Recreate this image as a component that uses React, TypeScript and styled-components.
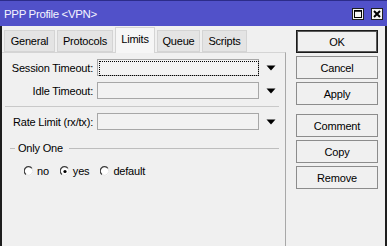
import React from "react";
import styled, { createGlobalStyle } from "styled-components";

const Global = createGlobalStyle`
  html, body { margin: 0; padding: 0; background: #f0f0f0; }
  body { font-family: "Liberation Sans", Arial, sans-serif; }
  * { box-sizing: border-box; }
`;

const Window = styled.div`
  width: 387px;
  height: 246px;
  display: flex;
  flex-direction: column;
  background: #f0f0f0;
  overflow: hidden;
`;

const TitleBar = styled.div`
  height: 26px;
  flex: none;
  display: flex;
  align-items: center;
  justify-content: space-between;
  background: #5151c9;
  border-top: 1px solid #2c2c8a;
  padding: 0 4px 0 4px;
`;

const Title = styled.span`
  color: #f4f4ff;
  font-size: 11.5px;
  letter-spacing: -0.35px;
  white-space: nowrap;
`;

const TitleButtons = styled.div`
  display: flex;
  gap: 7px;
  margin-top: 1px;
`;

const TitleButton = styled.div`
  width: 12px;
  height: 12px;
  background: #f4f4f4;
  border: 1px solid #202020;
  display: flex;
  align-items: center;
  justify-content: center;
`;

const Body = styled.div`
  flex: 1;
  display: flex;
  border-left: 2px solid #1e1e1e;
  border-right: 2px solid #1e1e1e;
`;

const Main = styled.div`
  width: 284px;
  display: flex;
  flex-direction: column;
`;

const Tabs = styled.div`
  display: flex;
  align-items: flex-end;
  height: 26px;
  padding-left: 2px;
  gap: 2px;
`;

const Tab = styled.div<{ $active?: boolean; $w: number }>`
  width: ${(p) => p.$w}px;
  font-size: 11px;
  letter-spacing: -0.2px;
  white-space: nowrap;
  color: #000;
  display: flex;
  align-items: center;
  justify-content: center;
  height: ${(p) => (p.$active ? "26px" : "22px")};
  background: ${(p) => (p.$active ? "#f6f6f6" : "#e4e4e4")};
  border: 1px solid #d4d4d4;
  border-bottom: ${(p) => (p.$active ? "none" : "1px solid #d4d4d4")};
  margin-bottom: ${(p) => (p.$active ? "-1px" : "0")};
  padding-bottom: ${(p) => (p.$active ? "3px" : "0")};
  position: relative;
`;

const Panel = styled.div`
  flex: 1;
  border-top: 1px solid #d4d4d4;
  border-right: 1px solid #a8a8a8;
  padding-top: 6px;
  display: flex;
  flex-direction: column;
`;

const FormRow = styled.div<{ $gap?: number }>`
  display: flex;
  align-items: center;
  height: 17px;
  flex: none;
  margin-bottom: ${(p) => p.$gap ?? 6}px;
`;

const Label = styled.div`
  width: 92px;
  text-align: right;
  font-size: 11px;
  letter-spacing: -0.2px;
  white-space: nowrap;
  color: #000;
  padding-right: 1px;
`;

const Field = styled.div<{ $focused?: boolean }>`
  margin-left: 3px;
  width: 162px;
  height: 17px;
  background: #f2f2f2;
  border: 1px solid #a7a7a7;
  padding: 1px;
  &::after {
    content: "";
    display: ${(p) => (p.$focused ? "block" : "none")};
    width: 100%;
    height: 100%;
    border: 1px dotted #000;
  }
`;

const ArrowBox = styled.div`
  width: 23px;
  display: flex;
  justify-content: center;
  padding-left: 1px;
`;

const Separator = styled.div<{ $top?: number; $bottom?: number }>`
  height: 1px;
  flex: none;
  background: #c9c9c9;
  margin: ${(p) => p.$top ?? 0}px 6px ${(p) => p.$bottom ?? 0}px 3px;
`;

const GroupHead = styled.div`
  display: flex;
  align-items: center;
  margin: 12px 6px 0 8px;
  gap: 3px;
  font-size: 11px;
  letter-spacing: -0.2px;
  white-space: nowrap;
  color: #000;
`;

const Dash = styled.div<{ $grow?: boolean }>`
  height: 1px;
  background: #bdbdbd;
  width: ${(p) => (p.$grow ? "auto" : "5px")};
  flex: ${(p) => (p.$grow ? 1 : "none")};
  margin-left: ${(p) => (p.$grow ? "3px" : "0")};
`;

const RadioRow = styled.div`
  display: flex;
  align-items: center;
  margin: 11px 0 0 22px;
  gap: 11px;
`;

const RadioItem = styled.label`
  display: flex;
  align-items: center;
  gap: 3px;
  font-size: 11px;
  letter-spacing: -0.2px;
  color: #000;
`;

const Side = styled.div`
  flex: 1;
  display: flex;
  flex-direction: column;
  padding: 4px 0 0 10px;
`;

const Button = styled.div<{ $default?: boolean; $gapAfter?: number }>`
  width: 82px;
  height: 23px;
  flex: none;
  display: flex;
  align-items: center;
  justify-content: center;
  font-size: 11px;
  letter-spacing: -0.2px;
  color: #000;
  background: #f0f0f0;
  border: 1px solid ${(p) => (p.$default ? "#1a1a1a" : "#8c8c8c")};
  box-shadow: ${(p) => (p.$default ? "inset 0 0 0 1px #5a5a5a" : "none")};
  margin-bottom: ${(p) => p.$gapAfter ?? 3}px;
`;

const DownArrow = () => (
  <svg width="10" height="6" viewBox="0 0 10 6">
    <polygon points="0.5,0.5 9.5,0.5 5,5.5" fill="#000" />
  </svg>
);

const Radio = ({ checked }: { checked?: boolean }) => (
  <svg width="10" height="11" viewBox="0 0 10 11">
    <circle cx="5" cy="5.5" r="4.3" fill="#ffffff" />
    <path d="M 8 2.5 A 4.3 4.3 0 1 0 2 8.5" fill="none" stroke="#3c3c3c" strokeWidth="1.2" />
    <path d="M 8 2.5 A 4.3 4.3 0 0 1 2 8.5" fill="none" stroke="#e4e4e4" strokeWidth="1" />
    {checked && <circle cx="5" cy="5.5" r="1.6" fill="#000" />}
  </svg>
);

const tabs = [
  { name: "General", w: 51 },
  { name: "Protocols", w: 56 },
  { name: "Limits", w: 40, active: true },
  { name: "Queue", w: 43 },
  { name: "Scripts", w: 45 },
];

export default function App() {
  return (
    <>
      <Global />
      <Window>
        <TitleBar>
          <Title>PPP Profile &lt;VPN&gt;</Title>
          <TitleButtons>
            <TitleButton>
              <svg width="8" height="8" viewBox="0 0 8 8">
                <rect x="0.5" y="0.5" width="7" height="7" fill="none" stroke="#000" />
                <line x1="0" y1="1" x2="8" y2="1" stroke="#000" strokeWidth="1.5" />
              </svg>
            </TitleButton>
            <TitleButton>
              <svg width="8" height="8" viewBox="0 0 8 8">
                <path d="M1 1 L7 7 M7 1 L1 7" stroke="#000" strokeWidth="2" />
              </svg>
            </TitleButton>
          </TitleButtons>
        </TitleBar>
        <Body>
          <Main>
            <Tabs>
              {tabs.map((t) => (
                <Tab key={t.name} $w={t.w} $active={t.active}>
                  {t.name}
                </Tab>
              ))}
            </Tabs>
            <Panel>
              <FormRow>
                <Label>Session Timeout:</Label>
                <Field $focused />
                <ArrowBox>
                  <DownArrow />
                </ArrowBox>
              </FormRow>
              <FormRow $gap={0}>
                <Label>Idle Timeout:</Label>
                <Field />
                <ArrowBox>
                  <DownArrow />
                </ArrowBox>
              </FormRow>
              <Separator $top={7} $bottom={6} />
              <FormRow $gap={0}>
                <Label>Rate Limit (rx/tx):</Label>
                <Field />
                <ArrowBox>
                  <DownArrow />
                </ArrowBox>
              </FormRow>
              <GroupHead>
                <Dash />
                <span>Only One</span>
                <Dash $grow />
              </GroupHead>
              <RadioRow>
                <RadioItem>
                  <Radio />
                  no
                </RadioItem>
                <RadioItem>
                  <Radio checked />
                  yes
                </RadioItem>
                <RadioItem>
                  <Radio />
                  default
                </RadioItem>
              </RadioRow>
            </Panel>
          </Main>
          <Side>
            <Button $default>OK</Button>
            <Button>Cancel</Button>
            <Button $gapAfter={9}>Apply</Button>
            <Button>Comment</Button>
            <Button>Copy</Button>
            <Button>Remove</Button>
          </Side>
        </Body>
      </Window>
    </>
  );
}
